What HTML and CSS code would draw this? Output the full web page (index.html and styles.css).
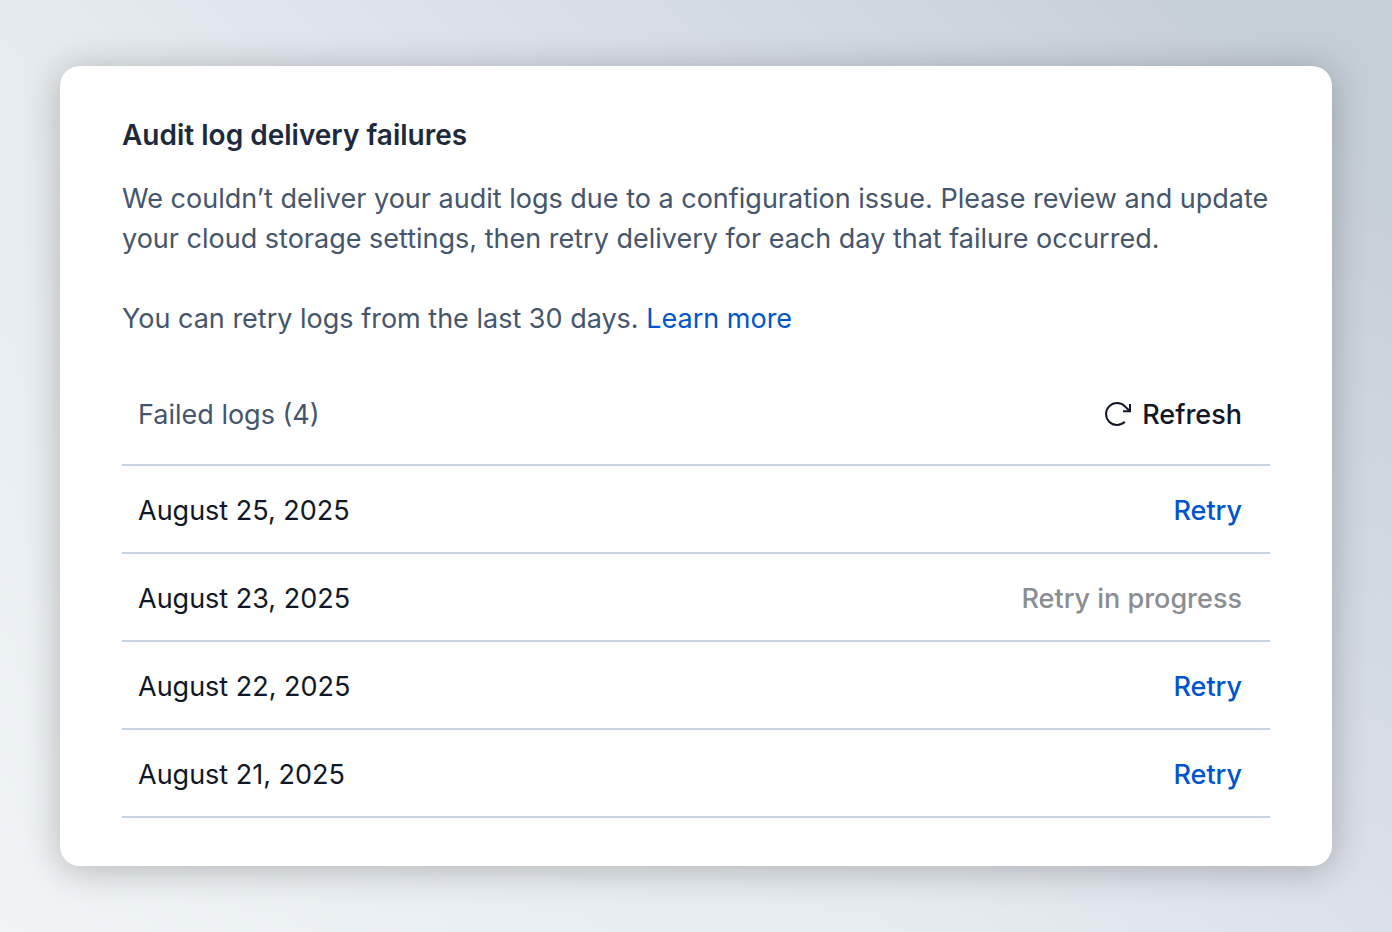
FILE: index.html
```html
<!DOCTYPE html>
<html lang="en">
<head>
  <meta charset="UTF-8">
  <meta name="viewport" content="width=device-width, initial-scale=1.0">
  <title>Audit log delivery failures</title>
  <link rel="stylesheet" href="styles.css">
</head>
<body>
  <main class="card">
    <h1 class="title">Audit log delivery failures</h1>
    <p class="text">We couldn’t deliver your audit logs due to a configuration issue. Please review and update your cloud storage settings, then retry delivery for each day that failure occurred.</p>
    <p class="text">You can retry logs from the last 30 days. <a href="#" class="link">Learn more</a></p>

    <table class="logs">
      <thead>
        <tr>
          <th scope="col">Failed logs (4)</th>
          <th class="action">
            <button type="button" class="refresh">
              <svg class="icon" viewBox="0 0 28 28" aria-hidden="true">
                <path d="M20.8 20.8A11 11 0 1 1 21 5.4L25.6 10"/>
                <path d="M26 3v7.2h-7"/>
              </svg>
              Refresh
            </button>
          </th>
        </tr>
      </thead>
      <tbody>
        <tr>
          <td>August 25, 2025</td>
          <td class="action"><button type="button" class="retry">Retry</button></td>
        </tr>
        <tr>
          <td>August 23, 2025</td>
          <td class="action"><button type="button" class="retry" disabled>Retry in progress</button></td>
        </tr>
        <tr>
          <td>August 22, 2025</td>
          <td class="action"><button type="button" class="retry">Retry</button></td>
        </tr>
        <tr>
          <td>August 21, 2025</td>
          <td class="action"><button type="button" class="retry">Retry</button></td>
        </tr>
      </tbody>
    </table>
  </main>
</body>
</html>
```
FILE: styles.css
```css
* {
  box-sizing: border-box;
}
body {
  margin: 0;
  min-height: 100vh;
  padding: 66px 60px;
  background: linear-gradient(45deg, #f0f4f7 0%, #e5eaee 42%, #dde1ea 58%, #c4ced7 95%);
  font-family: Inter, "Liberation Sans", sans-serif;
  font-size: 27px;
  line-height: 40px;
  color: #101828;
}
.card {
  background-color: #fff;
  border-radius: 20px;
  padding: 49px 62px 48px;
  box-shadow: 0 4px 36px rgba(0, 0, 0, 0.25);
}
.title {
  margin: 0 0 24px;
  font-size: 28px;
  font-weight: 600;
  color: #1d293d;
}
.text {
  margin: 0 0 40px;
  color: #45556c;
}
.link {
  color: #0055cc;
  text-decoration: none;
}
.logs {
  width: 100%;
  margin-top: -12px;
  border-collapse: separate;
  border-spacing: 0;
}
.logs th,
.logs td {
  padding: 25px 28px 21px 16px;
  border-bottom: 2px solid #cad5e2;
  text-align: left;
  font-weight: 400;
}
.logs th {
  padding-top: 28px;
  padding-bottom: 29px;
  color: #45556c;
}
.logs .action {
  padding-left: 0;
  text-align: right;
}
button {
  padding: 0;
  border: none;
  background: none;
  font: inherit;
  font-weight: 500;
  cursor: pointer;
  vertical-align: top;
}
.refresh {
  display: inline-flex;
  align-items: center;
  gap: 10px;
  color: #101828;
}
.icon {
  width: 28px;
  height: 28px;
  fill: none;
  stroke: currentColor;
  stroke-width: 2;
}
.retry {
  color: #0055cc;
}
.retry:disabled {
  color: #8a8d91;
  cursor: default;
}
```
